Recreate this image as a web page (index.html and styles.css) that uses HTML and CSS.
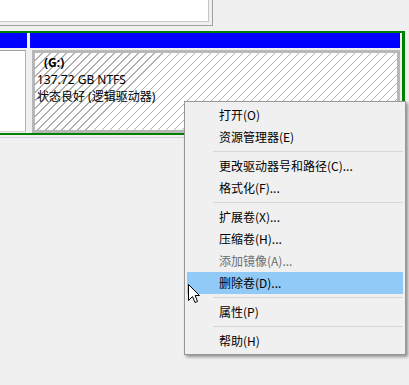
FILE: index.html
```html
<!DOCTYPE html>
<html lang="zh-CN">
<head>
<meta charset="utf-8">
<title>磁盘管理</title>
<link rel="stylesheet" href="styles.css">
</head>
<body>
<div class="screen">
  <div class="top-panel"><div class="list"></div></div>
  <div class="disk">
    <div class="part part-left">
      <div class="part-head"></div>
      <div class="part-body"><div class="plain"></div></div>
    </div>
    <div class="part part-right">
      <div class="part-head"></div>
      <div class="part-body">
        <div class="hatch">
          <div class="vol">(G:)</div>
          <div class="line">137.72 GB NTFS</div>
          <div class="line">状态良好 (逻辑驱动器)</div>
        </div>
      </div>
    </div>
  </div>
  <div class="disk-rule"></div>

  <div class="menu">
    <div class="item">打开(O)</div>
    <div class="item">资源管理器(E)</div>
    <div class="sep"></div>
    <div class="item">更改驱动器号和路径(C)...</div>
    <div class="item">格式化(F)...</div>
    <div class="sep"></div>
    <div class="item">扩展卷(X)...</div>
    <div class="item">压缩卷(H)...</div>
    <div class="item disabled">添加镜像(A)...</div>
    <div class="item active">删除卷(D)...</div>
    <div class="sep"></div>
    <div class="item">属性(P)</div>
    <div class="sep"></div>
    <div class="item">帮助(H)</div>
  </div>

  <svg class="cursor" width="13" height="20" viewBox="0 0 13 20">
    <path d="M0.5 0.5 L0.5 16.5 L4.5 12.5 L7 18.5 L9.5 17.5 L7.2 11.5 L11.5 11.5 Z" fill="#fff" stroke="#000" stroke-width="1" stroke-linejoin="miter"/>
  </svg>
</div>
</body>
</html>
```
FILE: styles.css
```css
html, body {
  margin: 0;
  padding: 0;
}
body {
  background: #f0f0f0;
  font-family: "Noto Sans", "Noto Sans CJK SC", sans-serif;
  font-size: 12px;
  color: #000;
}
.screen {
  position: relative;
  width: 409px;
  height: 385px;
  overflow: hidden;
}
.top-panel {
  width: 212px;
  height: 25px;
  border-right: 1px solid #a0a0a0;
  border-bottom: 1px solid #a0a0a0;
}
.list {
  width: 208px;
  height: 21px;
  background: #fff;
  border-right: 1px solid #c8c8c8;
  border-bottom: 1px solid #c8c8c8;
}
.disk {
  margin-top: 5px;
  width: 402px;
  display: flex;
  gap: 3px;
  border-top: 2px solid #008000;
  border-right: 3px solid #008000;
  border-bottom: 2px solid #008000;
}
.part-head {
  height: 15px;
  background: #0000ff;
}
.part-body {
  height: 85px;
  box-sizing: border-box;
}
.part-left {
  width: 27px;
}
.part-left .part-body {
  padding-top: 2px;
}
.plain {
  width: 26px;
  height: 82px;
  box-sizing: border-box;
  background: #fff;
  border-top: 1px solid #a0a0a0;
  border-right: 1px solid #b4b4b4;
  border-bottom: 1px solid #d8d8d8;
}
.part-right {
  width: 370px;
}
.part-right .part-body {
  padding: 2px 0 0 2px;
}
.hatch {
  height: 83px;
  box-sizing: border-box;
  border: 3px solid #b8b8b8;
  background-color: #fff;
  background-image: repeating-linear-gradient(135deg, transparent 0 4.9px, #b0b0b0 4.9px 5.66px);
  padding: 1px 0 0 2px;
  line-height: 17px;
}
.vol {
  font-weight: bold;
  padding-left: 7px;
}
.disk-rule {
  margin-top: 2px;
  width: 405px;
  height: 1px;
  background: #ccd4de;
}
.menu {
  position: absolute;
  left: 184px;
  top: 101px;
  width: 222px;
  box-sizing: border-box;
  padding: 2px;
  background: #f0f0f0;
  border: 1px solid #979797;
  box-shadow: 2px 2px 3px rgba(0, 0, 0, 0.4);
  font-family: "Noto Sans CJK SC", sans-serif;
}
.item {
  height: 22px;
  line-height: 22px;
  padding-left: 32px;
  white-space: nowrap;
}
.item.disabled {
  color: #6d6d6d;
}
.item.active {
  background: #91c9f7;
}
.sep {
  height: 7px;
  position: relative;
}
.sep::after {
  content: "";
  position: absolute;
  left: 26px;
  right: 0;
  top: 3px;
  height: 1px;
  background: #d7d7d7;
}
.cursor {
  position: absolute;
  left: 188px;
  top: 284px;
}
```
